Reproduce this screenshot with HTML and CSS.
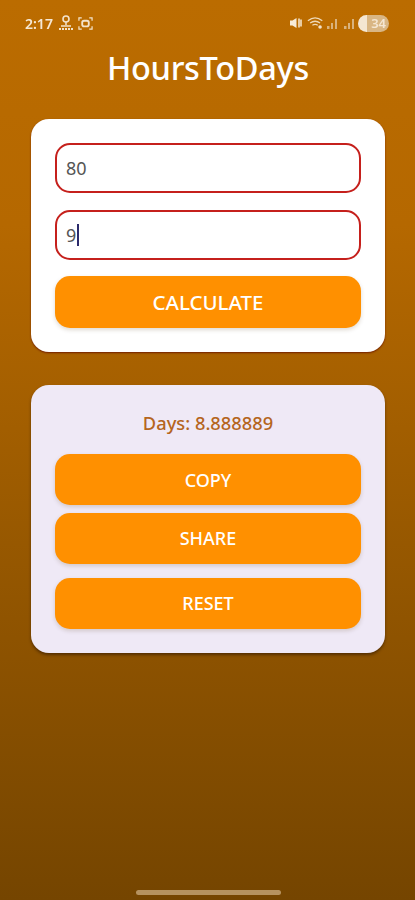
FILE: index.html
```html
<!DOCTYPE html>
<html lang="en">
<head>
<meta charset="utf-8">
<title>HoursToDays</title>
<link rel="stylesheet" href="styles.css">
</head>
<body>
<div class="screen">
  <div class="status">
    <div class="status-group">
      <span class="time">2:17</span>
      <svg class="ico" width="18" height="16" viewBox="0 0 18 16"><circle cx="9" cy="4" r="3" fill="none" stroke="#f3e3cc" stroke-width="1.600"/><path d="M9 7v3M4 11h10" stroke="#f3e3cc" stroke-width="1.500"/><path d="M2 14h14" stroke="#f3e3cc" stroke-width="2" stroke-dasharray="2 1"/></svg>
      <svg class="ico" width="15" height="15" viewBox="0 0 16 16"><path d="M1 5V2h3M12 2h3v3M15 11v3h-3M4 14H1v-3" fill="none" stroke="#f3e3cc" stroke-width="1.300"/><rect x="4.500" y="5" width="7" height="6" rx="2" fill="none" stroke="#f3e3cc" stroke-width="2"/></svg>
    </div>
    <div class="status-group right">
      <svg class="ico mute" width="13" height="12" viewBox="0 0 13 12"><path d="M1 3.500h2.500L7.500 1v10l-4-2.500H1z" fill="#f8ecd8"/><path d="M10 1.500v9M12 2.500v7" stroke="#f8ecd8" stroke-width="1.500"/></svg>
      <svg class="ico wifi" width="18" height="14" viewBox="0 0 20 14"><path d="M1 4.500C6 .5 12 .5 17 4.500M3.500 7C7 4.500 11 4.500 14.500 7M6 9.500c2-1.300 4-1.300 6 0" fill="none" stroke="#eed9b8" stroke-width="1.400"/><circle cx="14.500" cy="11.500" r="2" fill="#f3e3cc"/></svg>
      <svg class="ico sig first" width="12" height="12" viewBox="0 0 12 12"><path d="M0 9h2.500v3H0zM4 6h2v6H4zM8 2h2v10H8z" fill="#d9b27c"/></svg>
      <svg class="ico sig" width="12" height="12" viewBox="0 0 12 12"><path d="M0 9h2.500v3H0zM4 6h2v6H4zM8 2h2v10H8z" fill="#d9b27c"/></svg>
      <span class="battery">34</span>
    </div>
  </div>
  <h1 class="title">HoursToDays</h1>
  <section class="card white">
    <div class="field">80</div>
    <div class="field">9<span class="caret"></span></div>
    <button class="btn tall">CALCULATE</button>
  </section>
  <section class="card lilac">
    <p class="result">Days: 8.888889</p>
    <button class="btn">COPY</button>
    <button class="btn near">SHARE</button>
    <button class="btn far">RESET</button>
  </section>
  <div class="home"></div>
</div>
</body>
</html>
```

FILE: styles.css
```css
* { box-sizing: border-box; }
html, body { margin: 0; padding: 0; }
body { font-family: "Noto Sans", "Open Sans", sans-serif; }
.screen {
  position: relative;
  width: 415px;
  height: 900px;
  overflow: hidden;
  padding: 13px 30px 0 31px;
  background: linear-gradient(180deg, #bb6c00 0%, #b56800 25%, #a05d00 50%, #754500 100%);
}
.status {
  display: flex;
  justify-content: space-between;
  align-items: center;
  height: 20px;
  margin: 0 -4px 0 -6px;
  filter: blur(.35px);
}
.status-group { display: flex; align-items: center; gap: 3px; }
.status-group.right { gap: 0; }
.time { font-size: 14px; font-weight: 600; color: #f6e8d4; margin-right: 1px; }
.ico { display: block; }
.mute { margin-right: 5px; }
.wifi { margin-right: 2px; }
.sig { margin-right: 2px; }
.sig.first { margin-right: 5px; }
.battery {
  width: 31px;
  height: 17px;
  border-radius: 9px;
  background: linear-gradient(90deg, #f4e6d2 0 30%, #d9b684 30% 100%);
  color: #f4e6d2;
  font-size: 13px;
  font-weight: 600;
  line-height: 17px;
  text-align: right;
  padding-right: 3px;
}
.title {
  margin: 11px 0 0;
  height: 48px;
  font-size: 32.500px;
  line-height: 48px;
  font-weight: 500;
  color: #fff;
  text-align: center;
  letter-spacing: -0.300px;
}
.card { border-radius: 18px; padding: 24px; }
.white {
  margin-top: 27px;
  height: 233px;
  background: #fff;
  box-shadow: 0 1px 2px rgba(90, 0, 0, .7);
}
.lilac {
  margin-top: 33px;
  height: 268px;
  background: #efe9f6;
  box-shadow: 0 2px 3px rgba(50, 25, 0, .6);
}
.field {
  height: 50px;
  margin-bottom: 17px;
  padding-left: 9px;
  border: 2px solid #c5201c;
  border-radius: 15px;
  display: flex;
  align-items: center;
  font-size: 18px;
  color: #555;
}
.caret { width: 2px; height: 22px; margin-left: 1px; background: #2b2a6b; }
.btn {
  display: block;
  width: 100%;
  height: 51px;
  padding: 0;
  border: 0;
  border-radius: 15px;
  background: #ff9000;
  color: #fff;
  font-family: inherit;
  font-size: 18px;
  font-weight: 500;
  box-shadow: 0 2px 4px rgba(80, 50, 0, .18);
}
.tall { height: 52px; margin-top: -1px; font-size: 20.500px; }
.result {
  margin: 0 0 18px;
  height: 27px;
  font-size: 18.300px;
  line-height: 27px;
  font-weight: 500;
  color: #b5651d;
  text-align: center;
}
.near { margin-top: 8px; padding-bottom: 2px; }
.far { margin-top: 14px; padding-bottom: 2px; }
.home {
  position: absolute;
  left: 136px;
  bottom: 5px;
  width: 145px;
  height: 5px;
  border-radius: 3px;
  background: #b6925f;
}
```
